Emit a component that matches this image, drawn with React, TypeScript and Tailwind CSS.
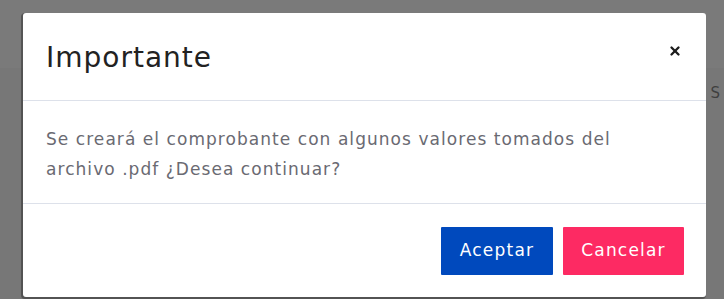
import { X } from "lucide-react";

const ConfirmModal = ({ title, message, onOk, onCancel }: any) => {
    return (
        <div className="absolute left-[23px] top-[13px] w-[683px] h-[284px] bg-white rounded-[3px] flex flex-col shadow-[-1px_1px_0_1px_rgba(60,60,60,0.6)]">
            <div className="h-[88px] shrink-0 flex items-center justify-between pl-[23px] pr-[24px] border-b border-[#dde1ea]">
                <h2 className="text-[28px] tracking-[1px] text-[#222] pt-[2px]">{title}</h2>
                <button className="text-[#1d1d1d] mt-[-12px]">
                    <X size={14} strokeWidth={4} />
                </button>
            </div>
            <div className="h-[103px] shrink-0 pl-[23px] pt-[23px] border-b border-[#dde1ea]">
                <p className="max-w-[600px] text-[17px] leading-[30px] tracking-[1.05px] text-[#6a6a72]">{message}</p>
            </div>
            <div className="flex-1 flex items-start justify-end gap-[10px] pt-[23px] pr-[22px]">
                <button onClick={onOk} className="w-[112px] h-[48px] bg-[#0049bd] text-white text-[17px] tracking-[1.2px] rounded-[1px]">Aceptar</button>
                <button onClick={onCancel} className="w-[121px] h-[48px] bg-[#fd2a63] text-white text-[17px] tracking-[1.2px] rounded-[1px]">Cancelar</button>
            </div>
        </div>
    )
}

export default function App() {
    return (
        <div className="relative w-[724px] h-[299px] overflow-hidden bg-[#777] font-['DejaVu_Sans',sans-serif]">
            <div className="h-[68px] bg-[#7a7a7a]" />
            <div className="flex justify-end pr-[4px] pt-[14px] text-[15px] text-[#3f3f3f]">S</div>
            <ConfirmModal
                title="Importante"
                message="Se creará el comprobante con algunos valores tomados del archivo .pdf ¿Desea continuar?"
                onOk={() => {}}
                onCancel={() => {}}
            />
        </div>
    )
}
